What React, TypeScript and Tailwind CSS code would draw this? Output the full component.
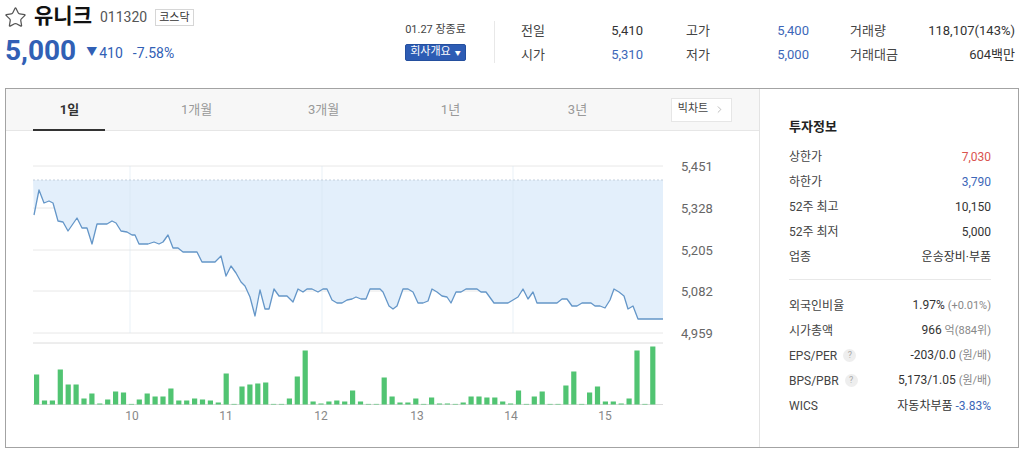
import React from 'react';
import { Star, ChevronRight } from 'lucide-react';

const font = 'font-[Roboto,"Noto_Sans_CJK_KR",sans-serif]';

const linePts: [number, number][] = [
  [34, 215], [39, 190], [44, 203], [49, 201], [53, 203], [58, 221], [63, 222], [68, 231], [77, 218], [82, 228],
  [87, 228], [92, 244], [97, 224], [107, 224], [112, 221], [116, 223], [121, 231], [127, 232], [132, 235], [135, 235],
  [139, 244], [148, 244], [154, 242], [159, 244], [163, 242], [168, 235], [173, 248], [178, 248], [183, 252], [197, 252],
  [202, 262], [215, 262], [221, 256], [226, 276], [231, 266], [236, 273], [241, 282], [245, 286], [250, 297], [255, 316],
  [260, 290], [265, 309], [269, 309], [274, 289], [279, 296], [287, 296], [293, 302], [298, 289], [303, 292], [307, 289],
  [312, 289], [318, 292], [323, 289], [327, 289], [332, 300], [337, 303], [342, 303], [347, 300], [352, 299], [356, 297],
  [361, 299], [366, 299], [370, 289], [380, 289], [383, 292], [389, 306], [393, 309], [397, 306], [403, 289], [408, 289],
  [413, 292], [418, 303], [423, 303], [428, 301], [432, 289], [437, 292], [442, 296], [447, 297], [451, 303], [456, 292],
  [461, 292], [466, 289], [477, 289], [481, 292], [486, 292], [494, 303], [508, 303], [513, 300], [518, 297], [523, 289],
  [528, 299], [533, 292], [537, 303], [557, 303], [562, 299], [567, 299], [572, 306], [577, 306], [582, 303], [591, 303],
  [595, 306], [600, 306], [605, 308], [610, 300], [614, 289], [619, 292], [624, 296], [628, 309], [633, 306], [638, 319],
  [663, 319],
];

const volumes = [
  30, 4, 4, 35, 20, 20, 6, 11, 1, 5, 13, 12, 0.5, 5, 11, 8, 8, 16, 4, 4, 6, 5, 4, 2, 31, 0.5, 18, 20, 21, 22,
  0.5, 0.5, 6, 28, 54, 3, 1, 3, 4, 3, 14, 3, 0.5, 0.5, 27, 8, 2, 2, 6, 0.5, 7, 1, 1, 0.5, 2, 8, 8, 7, 7, 3,
  1, 14, 0.5, 8, 13, 0.5, 0.5, 19, 33, 0.5, 12, 18, 3, 3, 1, 6, 54, 0.5, 58,
];

const yTicks = [
  { y: 166, label: '5,451' },
  { y: 208, label: '5,328' },
  { y: 250, label: '5,205' },
  { y: 291, label: '5,082' },
  { y: 333, label: '4,959' },
];

const xTicks = [
  { x: 132, label: '10' },
  { x: 226, label: '11' },
  { x: 321, label: '12' },
  { x: 417, label: '13' },
  { x: 511, label: '14' },
  { x: 605, label: '15' },
];

const tabs = ['1일', '1개월', '3개월', '1년', '3년'];

const PriceChart = () => {
  const line = linePts.map(([x, y]) => `${x},${y}`).join(' ');
  const area = `33,180 ${line} 663,180`;
  const base = 404.5;

  return (
    <svg className="block" width={754} height={316} viewBox="6 131 754 316">
      {yTicks.map((t) => (
        <g key={t.label}>
          <line x1={33} x2={663} y1={t.y} y2={t.y} stroke="#e8e8e8" />
          <text x={681} y={t.y + 5} fontSize={13} fill="#666" fontFamily="Roboto, sans-serif">
            {t.label}
          </text>
        </g>
      ))}
      <polygon points={area} fill="#e3effb" />
      {[130, 322, 513].map((x) => (
        <line key={x} x1={x} x2={x} y1={166} y2={333} stroke="#d6e4f2" strokeOpacity={0.5} />
      ))}
      <line x1={33} x2={663} y1={180} y2={180} stroke="#c3cfdc" strokeDasharray="2 2" />
      <polyline points={line} fill="none" stroke="#6496c8" strokeWidth={1.3} strokeLinejoin="round" />

      <line x1={33} x2={663} y1={343} y2={343} stroke="#dcdcdc" />
      <line x1={33} x2={663} y1={base} y2={base} stroke="#dadada" />
      {volumes.map((h, i) => (
        <rect key={i} x={34 + i * 7.9} y={base - Math.max(h, 0.6)} width={5.2} height={Math.max(h, 0.6)} fill="#51c472" />
      ))}
      {xTicks.map((t) => (
        <text key={t.label} x={t.x} y={420} fontSize={12} fill="#888" textAnchor="middle" fontFamily="Roboto, sans-serif">
          {t.label}
        </text>
      ))}
    </svg>
  );
};

type InfoRow = { label: React.ReactNode; value: React.ReactNode };

const group1: InfoRow[] = [
  { label: '상한가', value: <span className="text-[#d9534f]">7,030</span> },
  { label: '하한가', value: <span className="text-[#3d67b8]">3,790</span> },
  { label: '52주 최고', value: '10,150' },
  { label: '52주 최저', value: '5,000' },
  { label: '업종', value: '운송장비·부품' },
];

const Help = () => (
  <span className="ml-1.5 inline-flex h-[13px] w-[13px] items-center justify-center rounded-full bg-[#eeeeee] text-[9px] text-[#aaa]">?</span>
);

const Small = ({ children }: { children: React.ReactNode }) => (
  <span className="text-[11px] text-[#888]">{children}</span>
);

const group2: InfoRow[] = [
  { label: '외국인비율', value: <>1.97% <Small>(+0.01%)</Small></> },
  { label: '시가총액', value: <>966 <Small>억(884위)</Small></> },
  { label: <span className="flex items-center">EPS/PER<Help /></span>, value: <>-203/0.0 <Small>(원/배)</Small></> },
  { label: <span className="flex items-center">BPS/PBR<Help /></span>, value: <>5,173/1.05 <Small>(원/배)</Small></> },
  { label: 'WICS', value: <>자동차부품 <span className="text-[#3d67b8]">-3.83%</span></> },
];

const Rows = ({ rows }: { rows: InfoRow[] }) => (
  <div>
    {rows.map((r, i) => (
      <div key={i} className="flex h-[25px] items-center justify-between text-[12px]">
        <span className="text-[#444]">{r.label}</span>
        <span className="text-[#333]">{r.value}</span>
      </div>
    ))}
  </div>
);

const Stat = ({ label, value, valueClass, width }: { label: string; value: string; valueClass?: string; width: string }) => (
  <div className={`flex justify-between ${width}`}>
    <span className="text-[#444]">{label}</span>
    <span className={valueClass ?? 'text-[#333]'}>{value}</span>
  </div>
);

export default function App() {
  return (
    <div className={`h-[450px] w-[1024px] overflow-hidden bg-white ${font}`}>
      <header className="flex h-[88px]">
        <div className="w-[400px] pl-[4px] pt-[4px]">
          <div className="flex h-[26px] items-center">
            <Star size={23} strokeWidth={1.3} className="text-[#555]" />
            <span className="ml-[7px] text-[21px] font-bold text-[#111]">유니크</span>
            <span className="ml-[8px] text-[14px] text-[#555]">011320</span>
            <span className="ml-[8px] border border-[#d6d6d6] px-[3px] text-[11px] leading-[15px] text-[#333]">코스닥</span>
          </div>
          <div className="mt-[4px] flex items-end pl-[1px] text-[#3160b5]">
            <span className="text-[28px] font-bold leading-[34px]">5,000</span>
            <span className="mb-[4px] ml-[10px] flex items-center text-[14px]">
              <span className="mr-[2px] text-[11px]">▼</span>410
            </span>
            <span className="mb-[4px] ml-[10px] text-[14px]">-7.58%</span>
          </div>
        </div>
        <div className="ml-[5px] flex w-[61px] flex-col items-center pt-[22px]">
          <span className="text-[11px] leading-[16px] text-[#444]">01.27 장종료</span>
          <button className="mt-[6px] flex h-[17px] w-[61px] items-center justify-center gap-[4px] rounded-[2px] border border-[#244f9e] bg-[#2d5cb4] text-[11px] text-white">
            회사개요<span className="text-[6px]">▼</span>
          </button>
        </div>
        <div className="ml-[28px] mt-[21px] h-[42px] border-l border-[#e8e8e8]" />
        <div className="ml-[26px] flex flex-col gap-[10px] pt-[24px] text-[13px] leading-[14px]">
          <div className="flex">
            <Stat label="전일" value="5,410" width="w-[122px]" />
            <div className="w-[43px]" />
            <Stat label="고가" value="5,400" valueClass="text-[#3d67b8]" width="w-[123px]" />
            <div className="w-[41px]" />
            <Stat label="거래량" value="118,107(143%)" width="w-[165px]" />
          </div>
          <div className="flex">
            <Stat label="시가" value="5,310" valueClass="text-[#3d67b8]" width="w-[122px]" />
            <div className="w-[43px]" />
            <Stat label="저가" value="5,000" valueClass="text-[#3d67b8]" width="w-[123px]" />
            <div className="w-[41px]" />
            <Stat label="거래대금" value="604백만" width="w-[165px]" />
          </div>
        </div>
      </header>

      <section className="ml-[5px] flex h-[360px] w-[1014px] border border-[#a3a3a3]">
        <div className="w-[754px] border-r border-[#e3e3e3]">
          <div className="flex h-[42px] items-center border-b border-[#e6e6e6] bg-[#f7f7f7]">
            {tabs.map((t, i) => (
              <div key={t} className="relative flex h-full w-[127px] items-center justify-center">
                <span className={`text-[13px] ${i === 0 ? 'font-bold text-[#333]' : 'text-[#999]'}`}>{t}</span>
                {i === 0 && <span className="absolute bottom-[-1px] left-[27px] h-[2px] w-[72px] bg-[#333]" />}
              </div>
            ))}
            <button className="ml-[30px] flex h-[24px] w-[61px] items-center justify-center gap-[6px] border border-[#e6e6e6] bg-white text-[11px] text-[#444]">
              빅차트<ChevronRight size={11} strokeWidth={1.4} className="text-[#999]" />
            </button>
          </div>
          <PriceChart />
        </div>
        <div className="flex-1 pl-[29px] pr-[27px] pt-[28px]">
          <div className="text-[13px] font-bold leading-[20px] text-[#222]">투자정보</div>
          <div className="mt-[7px]">
            <Rows rows={group1} />
          </div>
          <div className="mt-[10px] border-t border-[#e8e8e8]" />
          <div className="mt-[13px]">
            <Rows rows={group2} />
          </div>
        </div>
      </section>
    </div>
  );
}
